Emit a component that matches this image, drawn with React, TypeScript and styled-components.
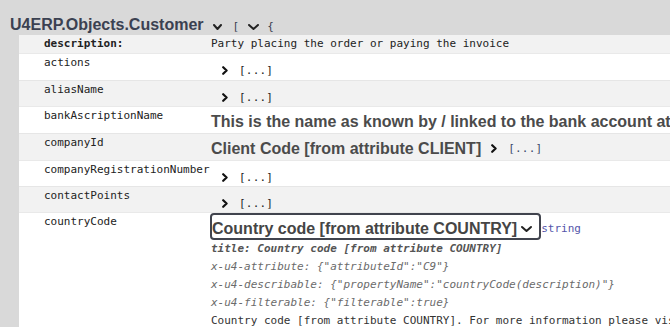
import React from "react";
import styled, { createGlobalStyle } from "styled-components";

const Global = createGlobalStyle`
  html, body { margin: 0; padding: 0; background: #d9d9d9; overflow: hidden; }
  body { width: 670px; height: 327px; }
`;

const mono = `"DejaVu Sans Mono", "Liberation Mono", monospace`;
const sans = `"Liberation Sans", Arial, sans-serif`;

const Page = styled.div`
  padding-left: 10px;
  width: 660px;
  height: 327px;
  overflow: hidden;
`;

const TitleLine = styled.div`
  display: flex;
  align-items: center;
  height: 35px;
  padding-top: 14px;
  box-sizing: border-box;
  white-space: nowrap;
`;

const ModelTitle = styled.span`
  font-family: ${sans};
  font-weight: 700;
  font-size: 16px;
  line-height: 19px;
  color: #3b4151;
`;

const Brace = styled.span<{ $gap: number }>`
  font-family: ${mono};
  font-size: 11px;
  line-height: 15px;
  color: ${(p) => (p.$gap ? "#3b4151" : "#7a8296")};
  margin-left: ${(p) => p.$gap}px;
  margin-top: 4px;
`;

const DownIcon = styled.svg<{ $ml: number }>`
  margin-left: ${(p) => p.$ml}px;
  margin-top: 4px;
  flex: none;
`;

const Table = styled.div`
  margin-left: 9px;
  width: 651px;
`;

const Row = styled.div<{ $shade: boolean; $h?: number }>`
  display: grid;
  grid-template-columns: 192px 1fr;
  box-sizing: border-box;
  height: ${(p) => (p.$h ? `${p.$h}px` : "auto")};
  border-top: 1px solid ${(p) => (p.$shade ? "#e6e6e6" : "#e9e9e9")};
  background: ${(p) => (p.$shade ? "#f2f2f2" : "#ffffff")};
  overflow: hidden;
  white-space: nowrap;
`;

const FirstRow = styled(Row)`
  border-top: none;
`;

const NameCell = styled.div<{ $bold?: boolean }>`
  font-family: ${mono};
  font-size: 11px;
  line-height: 15px;
  padding: 1px 0 0 25px;
  color: #222;
  font-weight: ${(p) => (p.$bold ? 700 : 400)};
`;

const ValueCell = styled.div<{ $pt: number }>`
  padding-top: ${(p) => p.$pt}px;
  display: flex;
  align-items: center;
  min-width: 0;
  height: fit-content;
`;

const PlainText = styled.span`
  font-family: ${mono};
  font-size: 11px;
  line-height: 15px;
  color: #222;
`;

const BigText = styled.span`
  font-family: ${sans};
  font-weight: 700;
  font-size: 16px;
  line-height: 19px;
  color: #4b4b4b;
`;

const Toggle = styled.span<{ $ml: number }>`
  display: inline-flex;
  align-items: center;
  margin-left: ${(p) => p.$ml}px;
`;

const Collapsed = styled.span<{ $blue?: boolean }>`
  font-family: ${mono};
  font-size: 11px;
  line-height: 15px;
  color: ${(p) => (p.$blue ? "#3b4a6b" : "#222")};
  margin-left: 11px;
  letter-spacing: 0.2px;
`;

const Detail = styled.div`
  display: flex;
  flex-direction: column;
`;

const TypeLine = styled.div`
  display: flex;
  align-items: flex-end;
`;

const SelectBox = styled.div`
  display: flex;
  align-items: center;
  box-sizing: border-box;
  height: 27px;
  border: 2px solid #41444e;
  border-radius: 4px;
  padding: 4px 6px 0 0;
  margin-left: -1px;
  font-family: ${sans};
  font-weight: 700;
  font-size: 16px;
  line-height: 19px;
  color: #454545;
`;

const SelectLabel = styled.span`
  align-self: flex-start;
`;

const TypeName = styled.span`
  font-family: ${mono};
  font-size: 11px;
  line-height: 15px;
  color: #55a;
  margin-bottom: 4px;
`;

const ExtLine = styled.div<{ $strong?: boolean }>`
  font-family: ${mono};
  font-size: 11px;
  line-height: 18px;
  font-style: italic;
  font-weight: ${(p) => (p.$strong ? 700 : 400)};
  color: ${(p) => (p.$strong ? "#555" : "#6b6b6b")};
`;

const DescLine = styled.div`
  font-family: ${mono};
  font-size: 11px;
  line-height: 18px;
  color: #333;
`;

const ChevronDown = ({ w, ml }: { w: number; ml: number }) => (
  <DownIcon $ml={ml} width={w} height={6} viewBox={`0 0 ${w} 6`}>
    <path
      d={`M1 1 L${w / 2} 5 L${w - 1} 1`}
      fill="none"
      stroke="#222"
      strokeWidth={2}
      strokeLinecap="round"
      strokeLinejoin="round"
    />
  </DownIcon>
);

const ChevronRight = () => (
  <svg width={6} height={9} viewBox="0 0 6 9">
    <path
      d="M1.2 1.2 L4.6 4.5 L1.2 7.8"
      fill="none"
      stroke="#111"
      strokeWidth={2.2}
      strokeLinecap="round"
      strokeLinejoin="round"
    />
  </svg>
);

const SelectChevron = () => (
  <svg width={13} height={8} viewBox="0 0 13 8" style={{ marginLeft: 3 }}>
    <path
      d="M2 2 L6.5 6 L11 2"
      fill="none"
      stroke="#222"
      strokeWidth={2}
      strokeLinecap="round"
      strokeLinejoin="round"
    />
  </svg>
);

type Prop =
  | { name: string; h: number; kind: "toggle" }
  | { name: string; h: number; kind: "big"; text: string; toggle?: boolean };

const props: Prop[] = [
  { name: "actions", h: 27, kind: "toggle" },
  { name: "aliasName", h: 26, kind: "toggle" },
  {
    name: "bankAscriptionName",
    h: 27,
    kind: "big",
    text: "This is the name as known by / linked to the bank account attached to the customer",
  },
  { name: "companyId", h: 27, kind: "big", text: "Client Code [from attribute CLIENT]", toggle: true },
  { name: "companyRegistrationNumber", h: 26, kind: "toggle" },
  { name: "contactPoints", h: 26, kind: "toggle" },
];

export default function App() {
  return (
    <>
      <Global />
      <Page>
        <TitleLine>
          <ModelTitle>U4ERP.Objects.Customer</ModelTitle>
          <ChevronDown w={9} ml={9} />
          <Brace $gap={11}>[</Brace>
          <ChevronDown w={11} ml={9} />
          <Brace $gap={8}>{"{"}</Brace>
        </TitleLine>
        <Table>
          <FirstRow $shade={true} $h={18}>
            <NameCell $bold>description:</NameCell>
            <ValueCell $pt={1}>
              <PlainText>Party placing the order or paying the invoice</PlainText>
            </ValueCell>
          </FirstRow>
          {props.map((p, i) => (
            <Row key={p.name} $shade={i % 2 === 1} $h={p.h}>
              <NameCell>{p.name}</NameCell>
              {p.kind === "toggle" ? (
                <ValueCell $pt={9}>
                  <Toggle $ml={11}>
                    <ChevronRight />
                    <Collapsed>[...]</Collapsed>
                  </Toggle>
                </ValueCell>
              ) : (
                <ValueCell $pt={5}>
                  <BigText>{p.text}</BigText>
                  {p.toggle && (
                    <Toggle $ml={10}>
                      <ChevronRight />
                      <Collapsed $blue>[...]</Collapsed>
                    </Toggle>
                  )}
                </ValueCell>
              )}
            </Row>
          ))}
          <Row $shade={false}>
            <NameCell>countryCode</NameCell>
            <Detail>
              <TypeLine>
                <SelectBox>
                  <SelectLabel>Country code [from attribute COUNTRY]</SelectLabel>
                  <SelectChevron />
                </SelectBox>
                <TypeName>string</TypeName>
              </TypeLine>
              <ExtLine $strong>title: Country code [from attribute COUNTRY]</ExtLine>
              <ExtLine>x-u4-attribute: {'{"attributeId":"C9"}'}</ExtLine>
              <ExtLine>x-u4-describable: {'{"propertyName":"countryCode(description)"}'}</ExtLine>
              <ExtLine>x-u4-filterable: {'{"filterable":true}'}</ExtLine>
              <DescLine>
                Country code [from attribute COUNTRY]. For more information please visit the documentation
              </DescLine>
            </Detail>
          </Row>
        </Table>
      </Page>
    </>
  );
}
